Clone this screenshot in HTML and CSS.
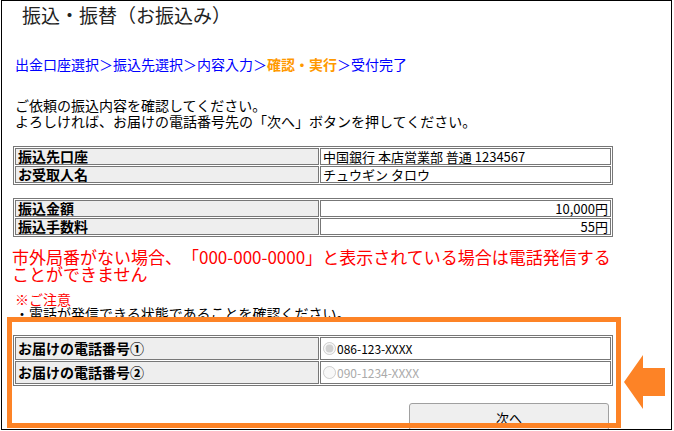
FILE: index.html
```html
<!DOCTYPE html>
<html lang="ja">
<head>
    <meta charset="UTF-8">
    <title>振込・振替（お振込み）</title>
    <link rel="stylesheet" href="styles.css">
</head>
<body>
    <div class="frame">
        <h1 class="title">振込・振替（お振込み）</h1>

        <p class="steps">出金口座選択＞振込先選択＞内容入力＞<span class="current">確認・実行</span>＞受付完了</p>

        <p class="lead">ご依頼の振込内容を確認してください。<br>よろしければ、お届けの電話番号先の「次へ」ボタンを押してください。</p>

        <table class="info">
            <tr>
                <th>振込先口座</th>
                <td>中国銀行 本店営業部 普通 1234567</td>
            </tr>
            <tr>
                <th>お受取人名</th>
                <td>チュウギン タロウ</td>
            </tr>
        </table>

        <table class="info amount">
            <tr>
                <th>振込金額</th>
                <td>10,000円</td>
            </tr>
            <tr>
                <th>振込手数料</th>
                <td>55円</td>
            </tr>
        </table>

        <p class="warning">市外局番がない場合、「000-000-0000」と表示されている場合は電話発信する<br>ことができません</p>

        <p class="notice"><span class="notice-head">※ご注意</span><br>・電話が発信できる状態であることを確認ください。</p>

        <table class="info phones">
            <tr>
                <th>お届けの電話番号①</th>
                <td><label><input type="radio" name="tel" checked disabled>086-123-XXXX</label></td>
            </tr>
            <tr>
                <th>お届けの電話番号②</th>
                <td><label class="off"><input type="radio" name="tel" disabled>090-1234-XXXX</label></td>
            </tr>
        </table>

        <div class="actions">
            <button class="next">次へ</button>
        </div>

        <div class="highlight"></div>
        <svg class="arrow" width="42" height="54" viewBox="0 0 42 54">
            <polygon points="0,27 19,0 19,13 41,13 41,41 19,41 19,54" fill="#fd8326"/>
        </svg>
    </div>
</body>
</html>
```

FILE: styles.css
```css
body {
    margin: 0;
    padding: 0;
    background: #fff;
    color: #000;
    font-family: "Noto Sans CJK JP", "Noto Sans", sans-serif;
    font-size: 14px;
    text-spacing-trim: space-all;
}

.frame {
    position: relative;
    box-sizing: border-box;
    width: 671px;
    height: 430px;
    margin-left: 1px;
    padding: 0 11px;
    border: 1px solid #000;
    overflow: hidden;
}

.title {
    margin: 0;
    padding: 3px 0 0 9px;
    font-size: 19px;
    font-weight: normal;
    line-height: 22px;
    color: #222;
}

.steps {
    margin: 30px 0 0 2px;
    line-height: 16px;
    color: #0000ff;
}

.steps .current {
    color: #ff9900;
    font-weight: bold;
}

.lead {
    margin: 25px 0 0 2px;
    line-height: 16px;
}

.info {
    width: 600px;
    margin-top: 17px;
    border: 1px solid #777;
    border-spacing: 1px;
    table-layout: fixed;
}

.info th,
.info td {
    height: 15px;
    padding: 0 2px;
    border: 1px solid #777;
    line-height: 15px;
    text-align: left;
    white-space: nowrap;
}

.info th {
    width: 298px;
    background: #eeeeee;
    font-weight: bold;
}

.info td {
    font-size: 13px;
}

.amount {
    margin-top: 13px;
}

.amount td {
    text-align: right;
}

.warning {
    margin: 11px 0 0 -1px;
    font-size: 17px;
    line-height: 17px;
    color: #ff0000;
}

.notice {
    margin: 10px 0 0 2px;
    line-height: 14px;
}

.notice-head {
    color: #ff0000;
}

.phones {
    margin-top: 15px;
}

.phones th,
.phones td {
    height: 21px;
    line-height: 21px;
}

.phones td {
    font-size: 12px;
}

.phones label {
    display: flex;
    align-items: center;
}

.phones label.off {
    color: #aaa;
}

.phones input {
    width: 13px;
    height: 13px;
    margin: 0 1px 0 0;
}

.actions {
    display: flex;
    justify-content: flex-end;
    width: 596px;
    margin-top: 17px;
}

.next {
    width: 200px;
    height: 28px;
    background: #efefef;
    border: 1px solid #a0a0a0;
    border-radius: 3px;
    font-family: inherit;
    font-size: 13px;
    color: #000;
}

.highlight {
    position: absolute;
    left: 5px;
    top: 316px;
    width: 604px;
    height: 101px;
    border: 5px solid #fd8326;
}

.arrow {
    position: absolute;
    left: 622px;
    top: 354px;
}
```
